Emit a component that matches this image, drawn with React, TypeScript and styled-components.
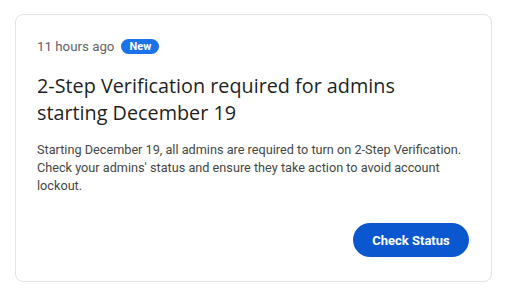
import React from "react";
import styled, { createGlobalStyle } from "styled-components";

const Global = createGlobalStyle`
  html, body { margin: 0; padding: 0; background: #ffffff; }
  body { font-family: Roboto, "Liberation Sans", Arial, sans-serif; }
`;

const Page = styled.div`
  padding: 14px 20px 0 15px;
  width: 512px;
  height: 299px;
  box-sizing: border-box;
`;

const Card = styled.div`
  box-sizing: border-box;
  width: 477px;
  height: 268px;
  border: 1px solid #e3e3e3;
  border-radius: 8px;
  padding: 22px 22px 24px 21px;
  display: flex;
  flex-direction: column;
`;

const Meta = styled.div`
  display: flex;
  align-items: center;
  gap: 7px;
  height: 18px;
`;

const Time = styled.span`
  font-family: Roboto, "Liberation Sans", sans-serif;
  font-size: 13.3px;
  color: #5f6368;
`;

const Badge = styled.span`
  display: inline-flex;
  align-items: center;
  justify-content: center;
  height: 15px;
  padding: 0 8px;
  border-radius: 8px;
  background: #1a73e8;
  color: #ffffff;
  font-family: Roboto, "Liberation Sans", sans-serif;
  font-size: 11px;
  font-weight: 700;
`;

const Title = styled.h2`
  margin: 17px 0 0;
  font-family: "Open Sans", "Liberation Sans", sans-serif;
  font-weight: 400;
  font-size: 19.8px;
  line-height: 27px;
  color: #1f1f1f;
`;

const Body = styled.p`
  margin: 15px 0 0;
  font-family: Roboto, "Liberation Sans", sans-serif;
  font-size: 12.7px;
  line-height: 18px;
  color: #444746;
  white-space: nowrap;
`;

const Actions = styled.div`
  margin-top: auto;
  display: flex;
  justify-content: flex-end;
`;

const Button = styled.button`
  width: 116px;
  height: 34px;
  border: none;
  border-radius: 17px;
  background: #0b57d0;
  color: #ffffff;
  font-family: Roboto, "Liberation Sans", sans-serif;
  font-size: 13px;
  font-weight: 700;
  cursor: pointer;
`;

export default function App() {
  return (
    <>
      <Global />
      <Page>
        <Card>
          <Meta>
            <Time>11 hours ago</Time>
            <Badge>New</Badge>
          </Meta>
          <Title>
            2-Step Verification required for admins
            <br />
            starting December 19
          </Title>
          <Body>
            Starting December 19, all admins are required to turn on 2-Step Verification.
            <br />
            Check your admins' status and ensure they take action to avoid account
            <br />
            lockout.
          </Body>
          <Actions>
            <Button>Check Status</Button>
          </Actions>
        </Card>
      </Page>
    </>
  );
}
